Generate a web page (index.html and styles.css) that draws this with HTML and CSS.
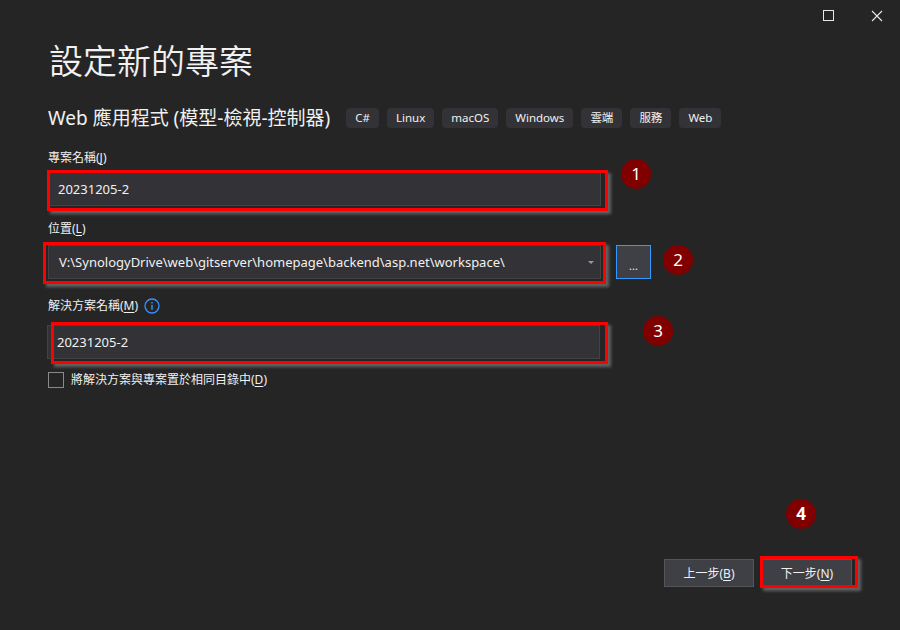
FILE: index.html
```html
<!DOCTYPE html>
<html lang="zh-Hant">
<head>
<meta charset="utf-8">
<title>設定新的專案</title>
<link rel="stylesheet" href="styles.css">
</head>
<body>
<div class="window">
  <div class="titlebar">
    <span class="ctl ctl-max" aria-label="maximize"></span>
    <svg class="ctl ctl-close" width="12" height="12" viewBox="0 0 12 12" aria-label="close"><path d="M1 1 L11 11 M11 1 L1 11" stroke="#e8e8e8" stroke-width="1.1" fill="none"/></svg>
  </div>
  <main class="content">
    <h1 class="title">設定新的專案</h1>
    <div class="subtitle-row">
      <span class="subtitle">Web 應用程式 (模型-檢視-控制器)</span>
      <div class="tags">
        <span class="tag">C#</span>
        <span class="tag">Linux</span>
        <span class="tag">macOS</span>
        <span class="tag">Windows</span>
        <span class="tag">雲端</span>
        <span class="tag">服務</span>
        <span class="tag">Web</span>
      </div>
    </div>

    <label class="label label-1">專案名稱(<u>J</u>)</label>
    <div class="input input-1">20231205-2</div>

    <label class="label label-2">位置(<u>L</u>)</label>
    <div class="row-loc">
      <div class="input select">
        <span>V:\SynologyDrive\web\gitserver\homepage\backend\asp.net\workspace\</span>
        <span class="caret"></span>
      </div>
      <button class="browse">...</button>
    </div>

    <div class="label label-3">
      <span>解決方案名稱(<u>M</u>)</span>
      <svg class="info" width="16" height="16" viewBox="0 0 16 16"><circle cx="8" cy="8" r="7" fill="none" stroke="#3794ff" stroke-width="1.3"/><rect x="7.3" y="6.8" width="1.4" height="5" fill="#3794ff"/><rect x="7.3" y="4" width="1.4" height="1.5" fill="#3794ff"/></svg>
    </div>
    <div class="input input-3">20231205-2</div>

    <div class="check-row">
      <span class="checkbox"></span>
      <span class="check-label">將解決方案與專案置於相同目錄中(<u>D</u>)</span>
    </div>
  </main>
  <footer class="footer">
    <button class="btn">上一步(<u>B</u>)</button>
    <button class="btn">下一步(<u>N</u>)</button>
  </footer>

  <div class="annotations">
    <div class="hl hl-1"></div>
    <div class="hl hl-2"></div>
    <div class="hl hl-3"></div>
    <div class="hl hl-4"></div>
    <div class="num num-1">1</div>
    <div class="num num-2">2</div>
    <div class="num num-3">3</div>
    <div class="num num-4">4</div>
  </div>
</div>
</body>
</html>
```

FILE: styles.css
```css
* { box-sizing: border-box; }
html, body { margin: 0; padding: 0; }
body {
  background: #252526;
  font-family: "Noto Sans", "Noto Sans CJK TC", sans-serif;
  color: #f1f1f1;
  font-size: 12px;
}
.window {
  position: relative;
  width: 900px;
  height: 630px;
  display: flex;
  flex-direction: column;
  overflow: hidden;
}
.titlebar {
  height: 32px;
  display: flex;
  justify-content: flex-end;
  align-items: center;
  padding-right: 17px;
  gap: 37px;
}
.ctl-max {
  width: 11px;
  height: 11px;
  border: 1px solid #e8e8e8;
  display: block;
  margin-top: -1px;
}
.ctl-close { display: block; margin-top: -1px; }

.content {
  padding-left: 48px;
  display: flex;
  flex-direction: column;
  align-items: flex-start;
}
.title {
  margin: 8px 0 0 1px;
  font-family: "Noto Sans CJK TC", sans-serif;
  font-weight: 350;
  font-size: 34px;
  line-height: 40px;
  color: #f1f1f1;
}
.subtitle-row {
  margin-top: 28px;
  display: flex;
  align-items: center;
  height: 20px;
}
.subtitle {
  font-family: "Noto Sans", "Noto Sans CJK TC", sans-serif;
  font-size: 19px;
  line-height: 20px;
  white-space: nowrap;
}
.tags {
  display: flex;
  gap: 8px;
  margin-left: 16px;
}
.tag {
  background: #333337;
  border-radius: 4px;
  height: 20px;
  line-height: 20px;
  padding: 0 9px;
  font-size: 11.5px;
  color: #f1f1f1;
}
.label {
  display: block;
  font-size: 12px;
  line-height: 16px;
  color: #f1f1f1;
}
.label u, .check-label u, .btn u { text-underline-offset: 2px; }
.label-1 { margin-top: 22px; }
.label-2 { margin-top: 15px; }
.label-3 {
  margin-top: 19px;
  display: flex;
  align-items: center;
  gap: 6px;
}
.info { display: block; }

.input {
  width: 553px;
  height: 34px;
  background: #333337;
  border: 1px solid #434346;
  padding: 0 9px;
  font-size: 13px;
  line-height: 32px;
  color: #f1f1f1;
  white-space: nowrap;
}
.input-1 { margin-top: 6px; }
.input-3 { margin-top: 11px; width: 553px; margin-left: -1px; }
.row-loc {
  margin-top: 8px;
  display: flex;
  align-items: flex-start;
  gap: 15px;
}
.select {
  display: flex;
  align-items: center;
  justify-content: space-between;
  padding-right: 6px;
  padding-left: 10px;
}
.caret {
  width: 0;
  height: 0;
  border-left: 3px solid transparent;
  border-right: 3px solid transparent;
  border-top: 3px solid #9a9a9a;
}
.browse {
  width: 35px;
  height: 34px;
  background: #3f3f46;
  border: 1px solid #3399ff;
  color: #f1f1f1;
  font-family: "Noto Sans", sans-serif;
  font-size: 11px;
  padding: 8px 0 0 0;
  line-height: 16px;
}
.check-row {
  margin-top: 13px;
  display: flex;
  align-items: center;
  gap: 7px;
}
.checkbox {
  width: 16px;
  height: 16px;
  border: 1px solid #8a8a8a;
  display: block;
}
.check-label { font-size: 12px; line-height: 16px; }

.footer {
  margin-top: auto;
  display: flex;
  justify-content: flex-end;
  gap: 8px;
  padding: 0 48px 43px 0;
}
.btn {
  width: 90px;
  height: 28px;
  background: #3f3f46;
  border: 1px solid #555558;
  color: #f1f1f1;
  font-family: "Noto Sans", "Noto Sans CJK TC", sans-serif;
  font-size: 12px;
  padding: 0;
}

/* annotation overlays */
.annotations { position: absolute; inset: 0; pointer-events: none; }
.hl {
  position: absolute;
  border: 3px solid #ff0000;
  box-shadow: 3px 3px 3px rgba(110,110,110,0.85);
}
.hl-1 { left: 47px; top: 170px; width: 561px; height: 41px; }
.hl-2 { left: 43px; top: 242px; width: 563px; height: 42px; }
.hl-3 { left: 51px; top: 322px; width: 557px; height: 42px; }
.hl-4 { left: 760px; top: 556px; width: 98px; height: 32px; }
.num {
  position: absolute;
  width: 30px;
  height: 30px;
  border-radius: 50%;
  background: #800000;
  color: #ffffff;
  font-family: "Noto Sans", sans-serif;
  font-size: 17px;
  line-height: 30px;
  text-align: center;
}
.num-1 { left: 621px; top: 159px; }
.num-2 { left: 663px; top: 245px; }
.num-3 { left: 643px; top: 316px; }
.num-4 { left: 786px; top: 499px; font-weight: 700; }
```
